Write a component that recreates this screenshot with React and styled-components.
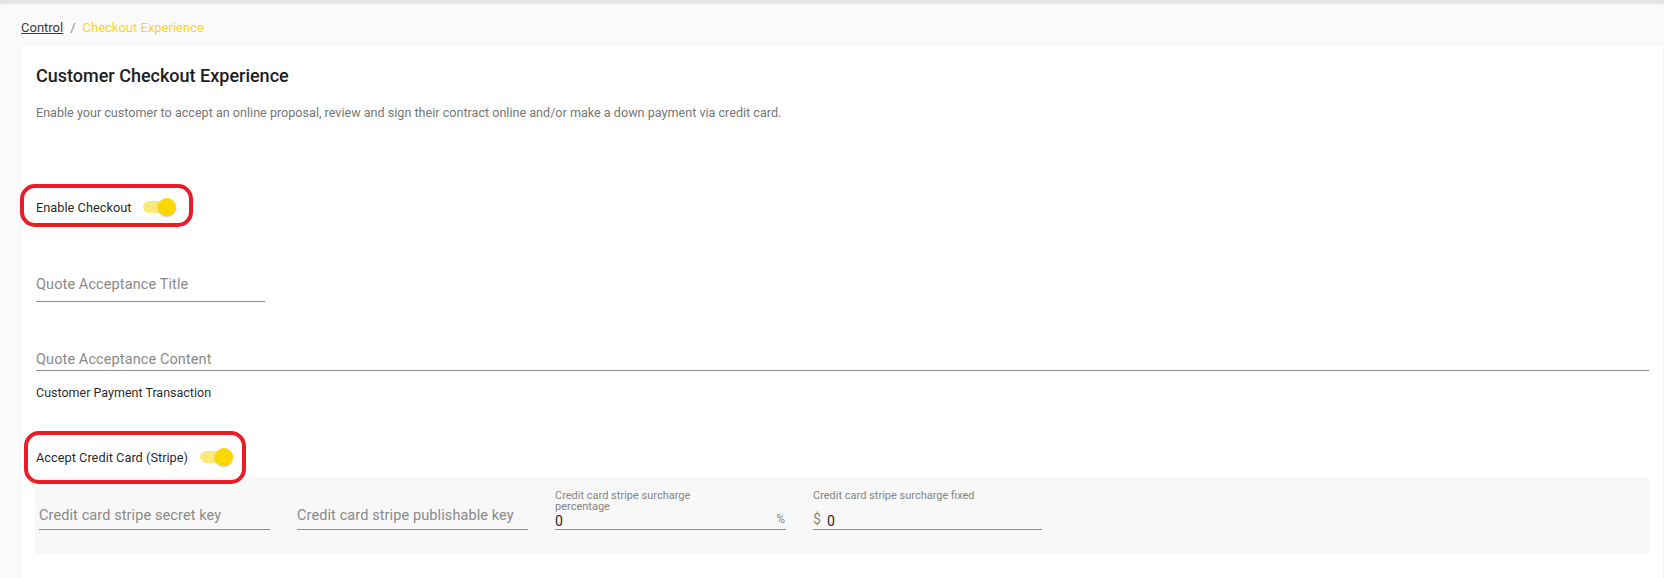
import React from 'react';
import styled, { createGlobalStyle } from 'styled-components';

const GlobalStyle = createGlobalStyle`
  html, body {
    margin: 0;
    padding: 0;
    background: #fafafa;
    font-family: Roboto, "Noto Sans", "Liberation Sans", sans-serif;
    overflow: hidden;
  }
`;

const Page = styled.div`
  min-height: 578px;
  padding: 0 1px 0 21px;
  position: relative;
  &::before {
    content: '';
    position: absolute;
    left: 0;
    right: 0;
    top: 0;
    height: 2px;
    background: #e4e4e4;
    box-shadow: 0 1px 3px rgba(0, 0, 0, 0.18);
  }
`;

const Breadcrumb = styled.nav`
  display: flex;
  align-items: center;
  gap: 7px;
  padding-top: 20px;
  height: 16px;
  font-size: 13px;
  line-height: 16px;
  a {
    color: #3a3a3a;
    text-decoration: underline;
  }
  span.sep {
    color: #8c8c8c;
  }
  span.current {
    color: #f9d32f;
  }
`;

const Card = styled.section`
  margin-top: 9px;
  background: #fff;
  border-radius: 4px 4px 0 0;
  box-shadow: 0 0 2px rgba(0, 0, 0, 0.08);
  padding: 19px 14px 40px 14px;
  min-height: 520px;
`;

const Title = styled.h2`
  margin: 0;
  font-size: 18px;
  line-height: 24px;
  font-weight: 500;
  color: #1d1d1f;
  padding-left: 1px;
`;

const Description = styled.p`
  margin: 16px 0 0 1px;
  font-size: 12.6px;
  line-height: 18px;
  color: #777;
`;

const Highlight = styled.div`
  position: relative;
  display: inline-flex;
  margin-top: ${({ $mt }) => $mt}px;
  margin-left: 1px;
  &::after {
    content: '';
    position: absolute;
    top: ${({ $box }) => -$box[0]}px;
    right: ${({ $box }) => -$box[1]}px;
    bottom: ${({ $box }) => -$box[2]}px;
    left: ${({ $box }) => -$box[3]}px;
    border: 4px solid #ec1c24;
    border-radius: 15px;
    pointer-events: none;
  }
`;

const SwitchRow = styled.label`
  display: inline-flex;
  align-items: center;
  gap: 12px;
  height: 24px;
  font-size: 12.8px;
  color: rgba(0, 0, 0, 0.87);
`;

const Track = styled.span`
  position: relative;
  display: inline-block;
  width: 30px;
  height: 12px;
  border-radius: 6px;
  background: #fde97a;
  margin-right: 3px;
`;

const Knob = styled.span`
  position: absolute;
  right: -3px;
  top: -3px;
  width: 18px;
  height: 18px;
  border-radius: 50%;
  background: #fdd700;
  box-shadow: 0 1px 2px rgba(0, 0, 0, 0.25);
`;

const Field = styled.div`
  width: ${({ $w }) => ($w ? `${$w}px` : 'auto')};
  margin-top: ${({ $mt }) => $mt || 0}px;
  padding-bottom: ${({ $pb }) => $pb || 0}px;
  margin-left: 1px;
  border-bottom: 1px solid #8f8f8f;
  font-size: 14.5px;
  line-height: ${({ $lh }) => $lh || 20}px;
  color: #8a8a8a;
  letter-spacing: 0.1px;
`;

const Caption = styled.div`
  margin-top: 13px;
  margin-left: 1px;
  font-size: 12.5px;
  line-height: 18px;
  color: rgba(0, 0, 0, 0.87);
`;

const StripePanel = styled.div`
  margin-top: 8px;
  background: #f8f8f8;
  padding: 13px 4px 24px 4px;
  display: flex;
  align-items: flex-end;
  gap: 27px;
`;

const PanelField = styled.div`
  width: ${({ $w }) => $w || 231}px;
  border-bottom: 1px solid #8f8f8f;
  display: flex;
  flex-direction: column;
  padding-bottom: ${({ $pb }) => $pb || 0}px;
`;

const Placeholder = styled.div`
  font-size: 14.5px;
  line-height: 20px;
  color: #8a8a8a;
  letter-spacing: 0.1px;
`;

const SmallLabel = styled.div`
  font-size: 11px;
  line-height: 11px;
  color: #858585;
  max-width: ${({ $wrap }) => ($wrap ? '150px' : 'none')};
`;

const ValueRow = styled.div`
  display: flex;
  align-items: center;
  height: 17px;
  margin-top: ${({ $mt }) => $mt || 0}px;
  font-size: 14px;
  color: #222;
`;

const Prefix = styled.span`
  color: #8a8a8a;
  font-size: 14px;
  margin-right: 6px;
  margin-top: -3px;
`;

const Suffix = styled.span`
  margin-left: auto;
  margin-right: 1px;
  color: #8a8a8a;
  font-size: 12px;
  margin-top: -4px;
`;

function Toggle({ label }) {
  return (
    <SwitchRow>
      {label}
      <Track>
        <Knob />
      </Track>
    </SwitchRow>
  );
}

export default function App() {
  return (
    <>
      <GlobalStyle />
      <Page>
        <Breadcrumb>
          <a href="#control">Control</a>
          <span className="sep">/</span>
          <span className="current">Checkout Experience</span>
        </Breadcrumb>
        <Card>
          <Title>Customer Checkout Experience</Title>
          <Description>
            Enable your customer to accept an online proposal, review and sign their contract online and/or make a down payment via credit card.
          </Description>

          <div>
            <Highlight $mt={73} $box={[11, 17, 8, 16]}>
              <Toggle label="Enable Checkout" />
            </Highlight>
          </div>

          <Field $w={229} $mt={54} $lh={24} $pb={4}>Quote Acceptance Title</Field>
          <Field $mt={48} $lh={20}>Quote Acceptance Content</Field>

          <Caption>Customer Payment Transaction</Caption>

          <div>
            <Highlight $mt={43} $box={[14, 13, 15, 12]}>
              <Toggle label="Accept Credit Card (Stripe)" />
            </Highlight>
          </div>

          <StripePanel>
            <PanelField $pb={3}>
              <Placeholder>Credit card stripe secret key</Placeholder>
            </PanelField>
            <PanelField $pb={3}>
              <Placeholder>Credit card stripe publishable key</Placeholder>
            </PanelField>
            <PanelField>
              <SmallLabel $wrap>Credit card stripe surcharge percentage</SmallLabel>
              <ValueRow>
                0<Suffix>%</Suffix>
              </ValueRow>
            </PanelField>
            <PanelField $w={229}>
              <SmallLabel>Credit card stripe surcharge fixed</SmallLabel>
              <ValueRow $mt={11}>
                <Prefix>$</Prefix>0
              </ValueRow>
            </PanelField>
          </StripePanel>
        </Card>
      </Page>
    </>
  );
}
